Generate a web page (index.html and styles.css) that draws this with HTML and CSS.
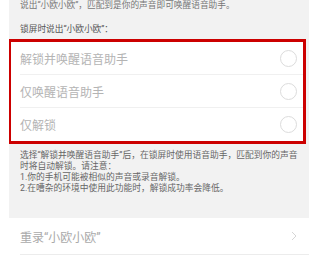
FILE: index.html
```html
<!DOCTYPE html>
<html lang="zh-CN">
<head>
<meta charset="utf-8">
<link rel="stylesheet" href="styles.css">
</head>
<body>
<div class="panel">
  <p class="intro">说出“小欧小欧”，匹配到是你的声音即可唤醒语音助手。</p>
  <p class="label">锁屏时说出“小欧小欧”：</p>
  <div class="card">
    <div class="row"><span>解锁并唤醒语音助手</span><i class="radio"></i></div>
    <div class="row"><span>仅唤醒语音助手</span><i class="radio"></i></div>
    <div class="row"><span>仅解锁</span><i class="radio"></i></div>
  </div>
  <div class="desc">
    <p>选择“解锁并唤醒语音助手”后，在锁屏时使用语音助手，匹配到你的声音时将自动解锁。请注意：</p>
    <p>1.你的手机可能被相似的声音或录音解锁。</p>
    <p>2.在嘈杂的环境中使用此功能时，解锁成功率会降低。</p>
  </div>
  <div class="list">
    <div class="item"><span>重录“小欧小欧”</span>
      <svg class="chev" width="6" height="10" viewBox="0 0 6 10"><path d="M1 1 L5 5 L1 9" fill="none" stroke="#d6d6d6" stroke-width="1"/></svg>
    </div>
  </div>
</div>
</body>
</html>
```

FILE: styles.css
```css
html, body {
  margin: 0;
  padding: 0;
  background: #ffffff;
}
body {
  font-family: "Roboto", "Noto Sans CJK SC", sans-serif;
  overflow: hidden;
  height: 263px;
}
.panel {
  margin-left: 9px;
  width: 300px;
  background: #f2f2f2;
  height: 263px;
  overflow: hidden;
}
p {
  margin: 0;
}
.intro {
  font-size: 8.7px;
  line-height: 11px;
  color: #777;
  padding: 0 0 0 11px;
  margin-top: 0;
}
.label {
  font-size: 8.7px;
  line-height: 11px;
  color: #555;
  padding: 13px 0 0 11px;
}
.card {
  margin: 4px 3px 0 -1px;
  border: 3px solid #cc0000;
  background: #fff;
}
.row {
  height: 33px;
  margin-left: 9px;
  padding-right: 6px;
  display: flex;
  align-items: center;
  justify-content: space-between;
  border-bottom: 1px solid #f0f0f0;
  box-sizing: border-box;
  font-size: 12px;
  color: #b4b4b4;
}
.row:last-child {
  border-bottom: none;
}
.radio {
  width: 17px;
  height: 17px;
  border: 1px solid #dcdcdc;
  border-radius: 50%;
  box-sizing: border-box;
}
.desc {
  padding: 6px 8px 0 11px;
  font-size: 8.75px;
  line-height: 11px;
  color: #666;
  height: 72px;
  box-sizing: border-box;
}
.list {
  margin-top: 2px;
  background: #fff;
  height: 60px;
}
.item {
  height: 36px;
  margin-left: 11px;
  padding-right: 12px;
  display: flex;
  align-items: center;
  justify-content: space-between;
  border-bottom: 1px solid #ececec;
  font-size: 12px;
  color: #aaa;
}
```
